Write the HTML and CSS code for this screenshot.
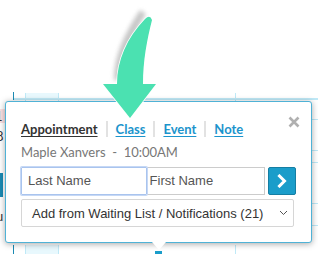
FILE: index.html
```html
<!DOCTYPE html>
<html>
<head>
<meta charset="utf-8">
<link rel="stylesheet" href="styles.css">
</head>
<body>
<div class="stage">
  <div class="leftcol">
    <span class="day pink">1</span>
    <span class="day">8</span>
    <span class="evt"></span>
    <span class="day u">u</span>
  </div>
  <div class="popover">
    <div class="head">
      <nav class="tabs">
        <a class="tab active">Appointment</a>
        <a class="tab">Class</a>
        <a class="tab">Event</a>
        <a class="tab">Note</a>
      </nav>
      <svg class="close" width="12" height="12" viewBox="0 0 12 12"><path d="M1.5 1.5L10.5 10.5M10.5 1.5L1.5 10.5" stroke="#b0b0b0" stroke-width="2.6" stroke-linecap="butt"/></svg>
    </div>
    <div class="who">Maple Xanvers&nbsp; -&nbsp; 10:00AM</div>
    <div class="row">
      <div class="field focus">Last Name</div>
      <div class="field">First Name</div>
      <div class="go"><svg width="10" height="14" viewBox="0 0 10 14"><path d="M2.5 2L7.5 7L2.5 12" fill="none" stroke="#fff" stroke-width="3" stroke-linecap="square"/></svg></div>
    </div>
    <div class="select">
      <span>Add from Waiting List / Notifications (21)</span>
      <svg width="9" height="6" viewBox="0 0 9 6"><path d="M1 1L4.5 4.5L8 1" fill="none" stroke="#555" stroke-width="1"/></svg>
    </div>
    <span class="tail"></span>
  </div>
  <svg class="arrow" width="318" height="130" viewBox="0 0 318 130">
    <defs>
      <filter id="blur" x="-50%" y="-50%" width="200%" height="200%"><feGaussianBlur stdDeviation="2.2"/></filter>
    </defs>
    <path d="M114 80 C114 56 124 34 140 10 L146 14 C132 36 124 58 122 80 Z" fill="#999" opacity="0.55" filter="url(#blur)"/>
    <path d="M117 84 C117 60 127 38 145 19 Q150 14 152 20 C147 40 143 60 143 84 L156 84 L130 118 L103 84 Z" fill="#4be1b1" stroke="#fff" stroke-width="1.5" stroke-linejoin="round"/>
    <path d="M117 84 C117 60 127 38 145 19 Q150 14 152 20 C147 40 143 60 143 84 L156 84 L130 118 L103 84 Z" fill="#4be1b1"/>
  </svg>
</div>
</body>
</html>
```
FILE: styles.css
```css
* { box-sizing: border-box; }
html, body { margin: 0; padding: 0; background: #fff; }
.stage {
  position: relative;
  width: 318px;
  height: 254px;
  overflow: hidden;
  display: flex;
  align-items: flex-start;
  padding-top: 101px;
  background-color: #fff;
  background-repeat: no-repeat;
  background-image:
    linear-gradient(#1b8ab3, #1b8ab3),
    linear-gradient(#1b8ab3, #1b8ab3),
    linear-gradient(#bfe9f7, #bfe9f7),
    linear-gradient(#bfe9f7, #bfe9f7),
    linear-gradient(#bfe9f7, #bfe9f7),
    linear-gradient(#bfe9f7, #bfe9f7),
    linear-gradient(#bfe9f7, #bfe9f7),
    linear-gradient(#bfe9f7, #bfe9f7),
    linear-gradient(#bfe9f7, #bfe9f7),
    linear-gradient(#bfe9f7, #bfe9f7),
    linear-gradient(#bfe9f7, #bfe9f7),
    linear-gradient(#bfe9f7, #bfe9f7),
    linear-gradient(#bfe9f7, #bfe9f7),
    linear-gradient(#bfe9f7, #bfe9f7),
    linear-gradient(#e8f8fd, #e8f8fd),
    linear-gradient(#e8f8fd, #e8f8fd),
    linear-gradient(#1a9dca, #1a9dca);
  background-size:
    1px 8px, 1px 10px,
    1px 8px, 1px 10px,
    1px 8px, 1px 10px,
    1px 8px, 1px 10px,
    305px 2px,
    8px 1px, 8px 1px, 8px 1px, 8px 1px, 8px 1px,
    32px 6px, 32px 10px,
    7px 3px;
  background-position:
    13px 92px, 13px 245px,
    25px 93px, 25px 245px,
    58px 93px, 58px 245px,
    235px 93px, 235px 245px,
    13px 98px,
    311px 119px, 311px 150px, 311px 162px, 311px 203px, 311px 225px,
    26px 93px, 26px 245px,
    155px 251px;
}
.leftcol {
  width: 5px;
  flex: none;
  display: flex;
  flex-direction: column;
  align-items: flex-start;
  padding-top: 8px;
  font-family: "Lato", sans-serif;
  font-size: 13px;
  color: #333;
  overflow: visible;
}
.day { display: block; width: 10px; height: 14px; line-height: 14px; margin-left: -3px; }
.pink { background: #fbe0e2; margin-left: -5px; width: 10px; }
.day:nth-child(2) { margin-top: 6px; margin-left: -4px; }
.evt { display: block; width: 3px; height: 24px; background: #1b8ab3; margin-top: 30px; }
.u { margin-top: 12px; margin-left: -4px; }

.popover {
  position: relative;
  z-index: 1;
  width: 307px;
  height: 142px;
  background: #fff;
  border: 1px solid #4fb2d6;
  border-radius: 3px;
  box-shadow: 0 1px 6px rgba(0,0,0,0.35);
  padding: 12px 15px 0 15px;
  font-family: "Lato", sans-serif;
}
.head { display: flex; justify-content: space-between; align-items: flex-start; }
.tabs { display: flex; align-items: center; padding-top: 7px; }
.tab {
  font-size: 13px;
  font-weight: 700;
  line-height: 16px;
  color: #1c94cc;
  text-decoration: underline;
  text-underline-offset: 2px;
  padding: 0 8px;
  border-left: 2px solid #e2e2e2;
}
.tab.active { color: #333; border-left: none; padding-left: 0; }
.close { margin-top: 2px; margin-right: -4px; }
.who {
  margin-top: 7px;
  font-size: 13px;
  line-height: 16px;
  color: #777;
}
.row { display: flex; margin-top: 7px; height: 28px; }
.field {
  font-family: "Liberation Sans", Arial, sans-serif;
  font-size: 13px;
  color: #555;
  line-height: 26px;
  height: 28px;
  border: 1px solid #ccc;
  padding-left: 6px;
}
.field.focus {
  width: 126px;
  border: 1px solid #a9c4ee;
  box-shadow: 0 0 0 1px #c6d8f5;
  border-radius: 1px;
  position: relative;
  z-index: 1;
}
.field:nth-child(2) { width: 119px; border-left: none; padding-left: 3px; }
.go {
  margin-left: 3px;
  width: 28px;
  height: 28px;
  background: #1a9dca;
  border: 1px solid #157ea3;
  border-radius: 2px;
  display: flex;
  align-items: center;
  justify-content: center;
}
.select {
  margin-top: 4px;
  width: 273px;
  height: 28px;
  border: 1px solid #d6d6d6;
  border-radius: 2px;
  display: flex;
  align-items: center;
  justify-content: space-between;
  padding: 0 5px 0 10px;
  font-family: "Liberation Sans", Arial, sans-serif;
  font-size: 13px;
  color: #333;
}
.tail {
  position: absolute;
  left: 146px;
  bottom: -8px;
  width: 0; height: 0;
  border-left: 7px solid transparent;
  border-right: 7px solid transparent;
  border-top: 8px solid #fff;
}
.arrow { position: absolute; left: 0; top: 0; z-index: 2; pointer-events: none; }
```
